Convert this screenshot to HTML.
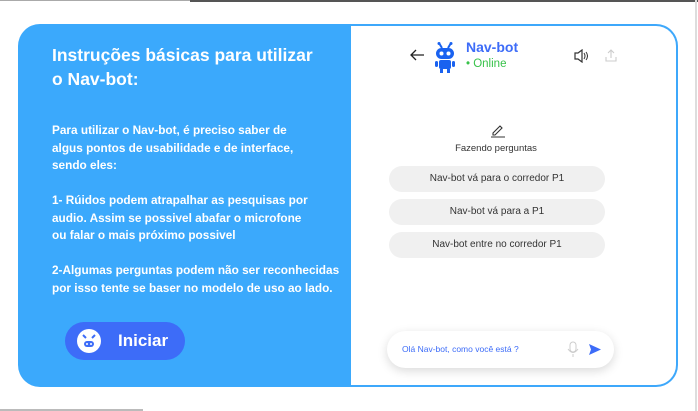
<!DOCTYPE html>
<html><head><meta charset="utf-8"><style>
*{margin:0;padding:0;box-sizing:border-box}
body{width:698px;height:411px;background:#fff;position:relative;overflow:hidden;font-family:"Liberation Sans",sans-serif}
.t1{position:absolute;left:0;top:0;width:190px;height:1px;background:#aaa}
.t2{position:absolute;left:190px;top:0;width:508px;height:2px;background:#555}
.b1{position:absolute;left:0;top:409px;width:143px;height:2px;background:#bbb}
.rl{position:absolute;left:695px;top:0;width:2px;height:411px;background:#ddd}
.left{position:absolute;left:18px;top:24px;width:334px;height:363px;background:#3ba9fc;border-radius:22px 0 0 22px;color:#fff}
.right{position:absolute;left:351px;top:24px;width:327px;height:363px;background:#fff;border:2px solid #3ea8fb;border-left:none;border-radius:0 22px 22px 0}
h1{position:absolute;left:34px;top:19px;font-size:17.5px;line-height:24px;font-weight:bold;width:272px}
.p{position:absolute;left:34px;font-size:11.8px;font-weight:bold;line-height:17.5px;width:310px;white-space:nowrap}
.btn{position:absolute;left:47px;top:298px;width:120px;height:38px;border-radius:19px;background:#3d6cf8;}
.btn span{position:absolute;left:53px;top:9px;font-size:17px;font-weight:bold;color:#fff}
.face{position:absolute;left:12px;top:7px;width:24px;height:24px;border-radius:50%;background:#fff}
.pill{position:absolute;left:38px;width:216px;height:26px;border-radius:13px;background:#f0f0f0;font-size:10px;color:#333;text-align:center;line-height:26px}
.inp{position:absolute;left:36px;top:305px;width:227px;height:37px;border-radius:19px;background:#fff;box-shadow:0 3px 10px rgba(0,0,0,.15)}
</style></head><body>
<div class="t1"></div><div class="t2"></div><div class="b1"></div><div class="rl"></div>
<div class="left">
<h1>Instruções básicas para utilizar o Nav-bot:</h1>
<div class="p" style="top:98px">Para utilizar o Nav-bot, é preciso saber de<br>algus pontos de usabilidade e de interface,<br>sendo eles:</div>
<div class="p" style="top:168px">1- Rúidos podem atrapalhar as pesquisas por<br>audio. Assim se possivel abafar o microfone<br>ou falar o mais próximo possivel</div>
<div class="p" style="top:238px">2-Algumas perguntas podem não ser reconhecidas<br>por isso tente se baser no modelo de uso ao lado.</div>
<div class="btn"><div class="face"><svg width="24" height="24"><path d="M6 6l3 3M18 6l-3 3" stroke="#3d6cf8" stroke-width="2"/><rect x="7" y="12" width="10" height="6" rx="3" fill="#3d6cf8"/><circle cx="10" cy="15" r="1" fill="#fff"/><circle cx="14" cy="15" r="1" fill="#fff"/></svg></div><span>Iniciar</span></div>
</div>
<div class="right">
<svg style="position:absolute;left:58px;top:23px" width="16" height="12"><path d="M15 6H2M7 1L2 6l5 5" stroke="#222" stroke-width="1.3" fill="none"/></svg>
<svg style="position:absolute;left:83px;top:16px" width="22" height="32" viewBox="0 0 22 32"><path d="M5 1l3 5M17 1l-3 5" stroke="#1a62f0" stroke-width="2"/><circle cx="5" cy="1.5" r="1.5" fill="#1a62f0"/><circle cx="17" cy="1.5" r="1.5" fill="#1a62f0"/><rect x="2" y="6" width="18" height="11" rx="5.5" fill="#1a62f0"/><circle cx="7.5" cy="11.5" r="2" fill="#fff"/><circle cx="14.5" cy="11.5" r="2" fill="#fff"/><rect x="5" y="18" width="12" height="9" rx="2" fill="#1a62f0"/><rect x="1" y="19" width="3" height="6" rx="1.5" fill="#1a62f0"/><rect x="18" y="19" width="3" height="6" rx="1.5" fill="#1a62f0"/><rect x="6" y="27" width="3" height="4" fill="#1a62f0"/><rect x="13" y="27" width="3" height="4" fill="#1a62f0"/></svg>
<div style="position:absolute;left:115px;top:13px;font-size:14px;font-weight:bold;color:#3d6cf8">Nav-bot</div>
<div style="position:absolute;left:115px;top:32px;font-size:11.5px;color:#38c24a">• Online</div>
<svg style="position:absolute;left:223px;top:23px" width="14" height="14"><path d="M1 4h3l4-3v12l-4-3H1z" stroke="#333" fill="none" stroke-width="1.2"/><path d="M10 4q2 3 0 6M12 3q3 4 0 8" stroke="#333" fill="none" stroke-width="1"/></svg>
<svg style="position:absolute;left:253px;top:22px" width="14" height="15"><path d="M7 10V2M4 5l3-3 3 3M2 9v4h10V9" stroke="#ccc" fill="none" stroke-width="1.1"/></svg>
<svg style="position:absolute;left:139px;top:96px" width="16" height="16"><path d="M3 11l7-7 2 2-7 7H3z" stroke="#333" fill="none" stroke-width="1.1"/><path d="M1 15h14" stroke="#333"/></svg>
<div style="position:absolute;left:0;width:290px;top:117px;text-align:center;font-size:9.5px;color:#333">Fazendo perguntas</div>
<div class="pill" style="top:140px">Nav-bot vá para o corredor P1</div>
<div class="pill" style="top:173px">Nav-bot vá para a P1</div>
<div class="pill" style="top:206px">Nav-bot entre no corredor P1</div>
<div class="inp"><span style="position:absolute;left:15px;top:13px;font-size:8.5px;color:#3d6cf8">Olá Nav-bot, como você está ?</span>
<svg style="position:absolute;left:180px;top:10px" width="12" height="17"><rect x="3" y="1" width="6" height="10" rx="3" stroke="#ccc" fill="none"/><path d="M1 8q5 7 10 0M6 13v3" stroke="#ccc" fill="none"/></svg>
<svg style="position:absolute;left:201px;top:12px" width="14" height="13"><path d="M1 1l12 5.5L1 12l2-5.5z" fill="#3d6cf8"/></svg>
</div>
</div>
</body></html>
